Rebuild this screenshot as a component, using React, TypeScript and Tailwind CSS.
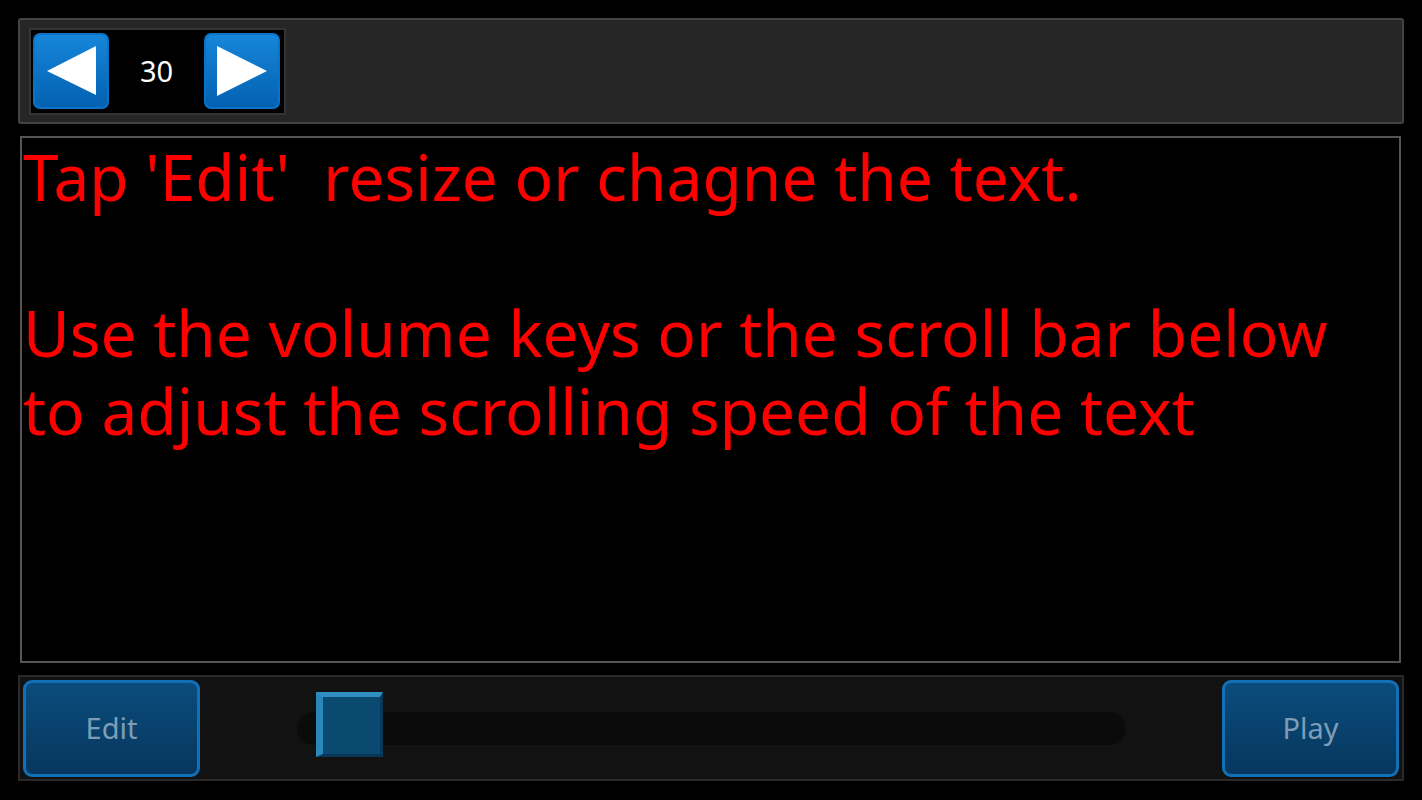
import React from "react";

const font = { fontFamily: '"Noto Sans", "Open Sans", sans-serif' };

function ArrowButton({ dir }: { dir: "left" | "right" }) {
  return (
    <button className="w-[76px] h-[76px] rounded-[7px] border-2 border-[#0a73c6] bg-gradient-to-b from-[#1686da] to-[#0461b1] flex items-center justify-center">
      <svg width="76" height="76" viewBox="0 0 76 76" className="-m-[2px]">
        {dir === "left" ? (
          <polygon points="14,38 63,13 63,62" fill="#fff" />
        ) : (
          <polygon points="13,13 63,38 13,63" fill="#fff" />
        )}
      </svg>
    </button>
  );
}

function BlueButton({ label }: { label: string }) {
  return (
    <button
      className="w-[177px] h-[97px] rounded-[9px] border-[3px] border-[#1270b9] bg-gradient-to-b from-[#0b4c7c] to-[#06375e] text-[#7d9db6] text-[29px] flex items-center justify-center"
      style={font}
    >
      {label}
    </button>
  );
}

export default function App() {
  return (
    <div className="w-[1422px] h-[800px] bg-black flex flex-col pt-[18px]" style={font}>
      {/* counter bar */}
      <div className="mx-[18px] h-[106px] bg-[#262626] border-2 border-[#444] rounded-[3px] flex items-center pl-[9px]">
        <div className="w-[257px] h-[87px] bg-black border-2 border-[#333] flex items-center justify-between pl-[2px] pr-[4px]">
          <ArrowButton dir="left" />
          <span className="text-white text-[29px]">30</span>
          <ArrowButton dir="right" />
        </div>
      </div>

      {/* text area */}
      <div className="ml-[20px] mr-[21px] mt-[12px] h-[527px] border-2 border-[#555] bg-black pl-[1px]">
        <div className="text-[#ff0000] text-[64px] leading-[78px] whitespace-pre-wrap">
          {"Tap 'Edit'  resize or chagne the text.\n\nUse the volume keys or the scroll bar below\nto adjust the scrolling speed of the text"}
        </div>
      </div>

      {/* controls */}
      <div className="mx-[18px] mt-[12px] h-[106px] bg-[#121212] border-2 border-[#2a2a2a] flex items-center justify-between px-[3px]">
        <BlueButton label="Edit" />
        <div className="flex-1 flex items-center pl-[97px] pr-[96px]">
          <div className="relative w-full h-[33px] rounded-full bg-[#0b0b0b]">
            <div className="absolute left-[19px] top-[-20px] w-[67px] h-[65px] bg-[#0b4a70] border-l-[7px] border-t-[5px] border-l-[#2a87b9] border-t-[#2f8fc2] border-r-[3px] border-r-[#08395a] border-b-[3px] border-b-[#073656]" />
          </div>
        </div>
        <BlueButton label="Play" />
      </div>
    </div>
  );
}
